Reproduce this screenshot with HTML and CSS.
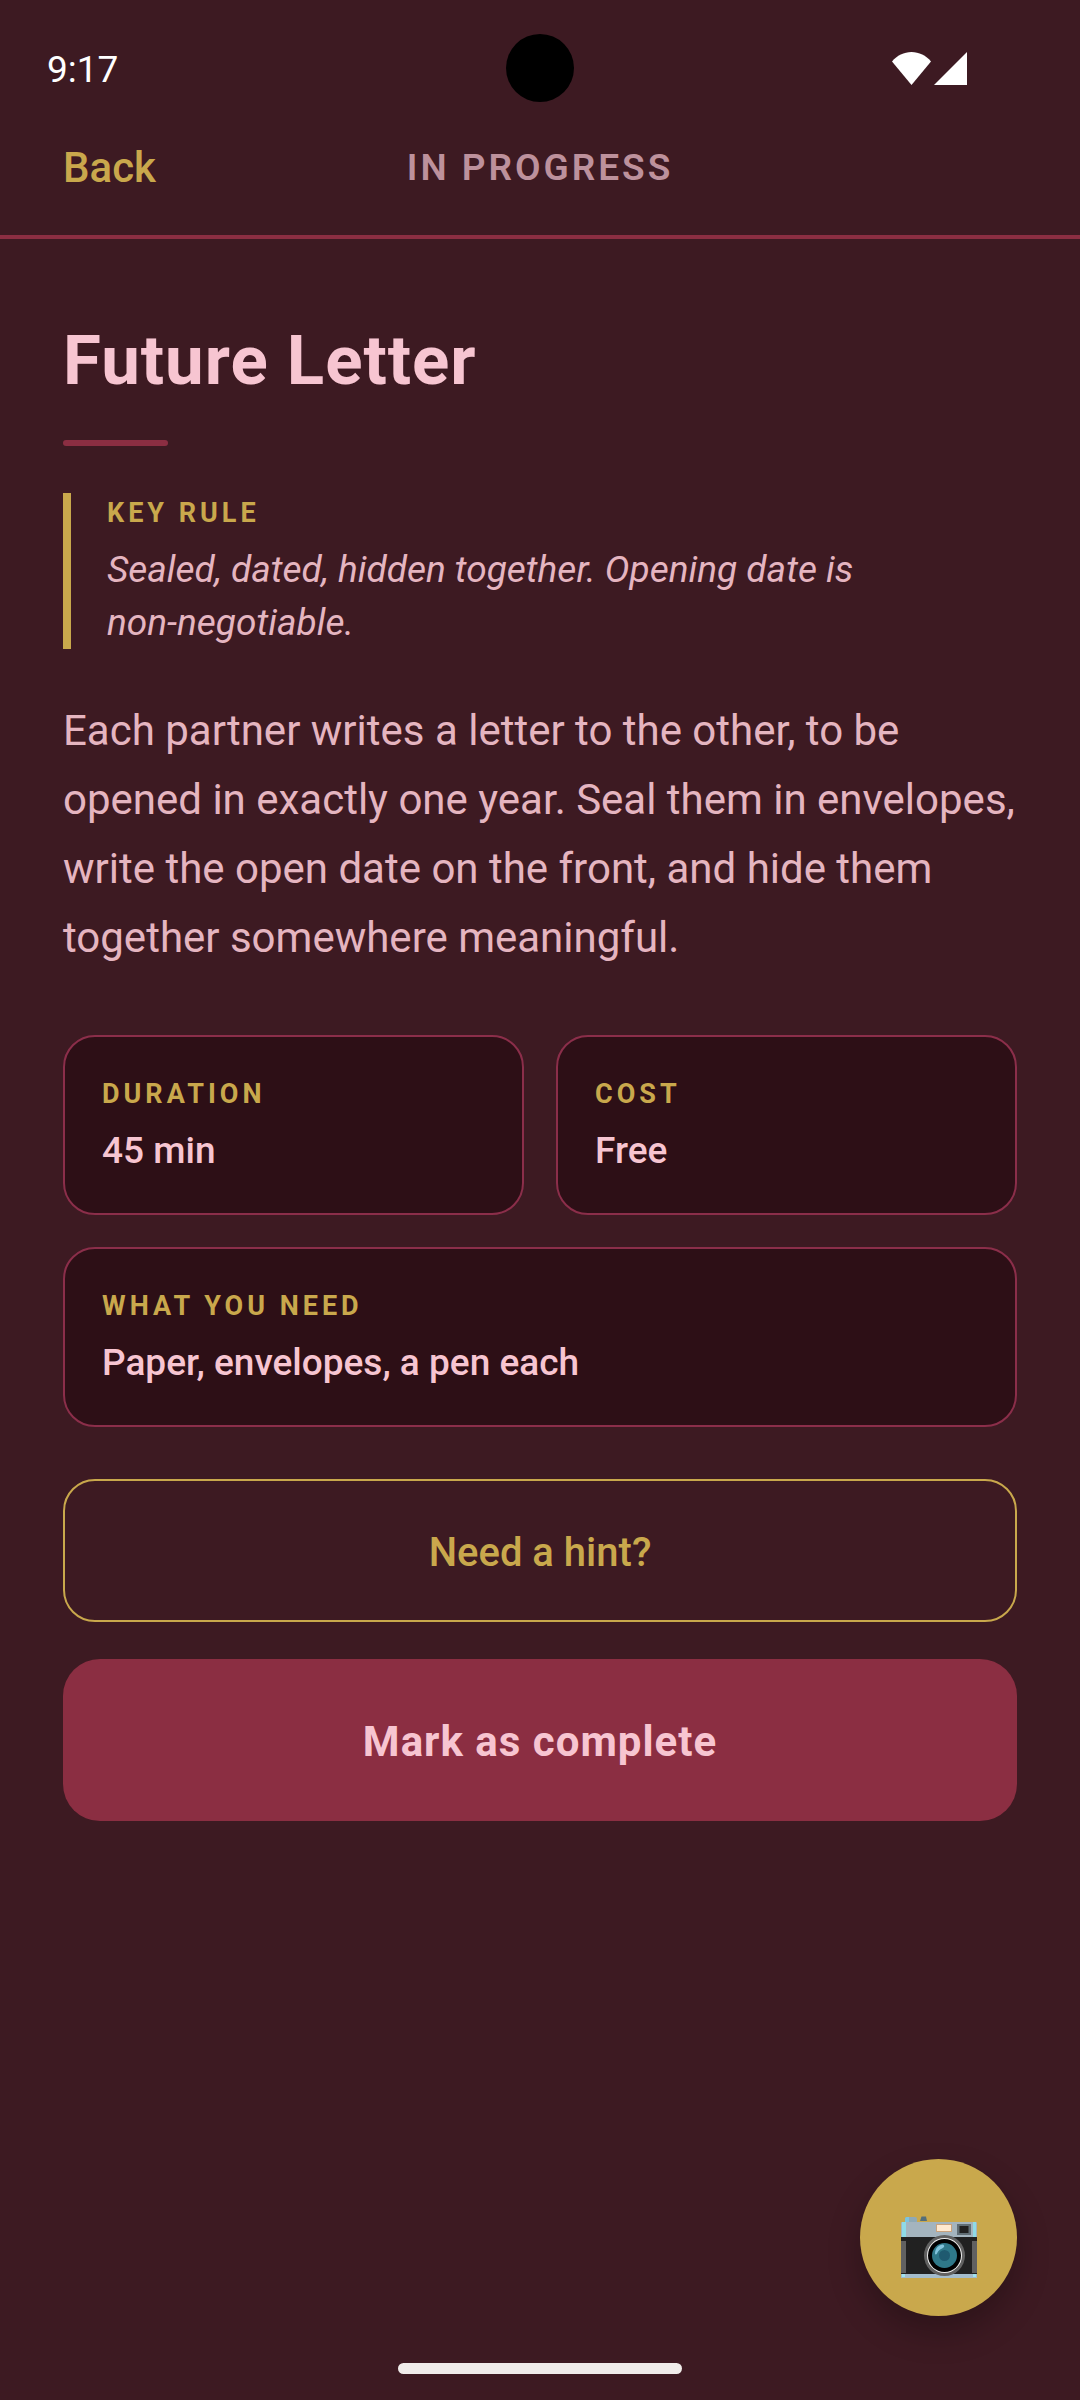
FILE: index.html
```html
<!DOCTYPE html>
<html lang="en">
<head>
    <meta charset="UTF-8">
    <meta name="viewport" content="width=device-width, initial-scale=1.0">
    <title>Future Letter</title>
    <link rel="stylesheet" href="styles.css">
</head>
<body>
    <div class="status-bar">
        <span class="clock">9:17</span>
        <span class="punch-hole"></span>
        <div class="status-icons">
            <svg width="39" height="33" viewBox="0 0 39 33" aria-hidden="true">
                <path d="M0 9.5C5 3.5 12 0 19.5 0S34 3.5 39 9.5L19.5 33z" fill="#fff"/>
            </svg>
            <svg width="33" height="33" viewBox="0 0 33 33" aria-hidden="true">
                <path d="M33 0v33H0z" fill="#fff"/>
            </svg>
        </div>
    </div>

    <header class="top-bar">
        <a class="back" href="#">Back</a>
        <span class="state">IN PROGRESS</span>
    </header>

    <main class="content">
        <h1>Future Letter</h1>
        <div class="divider"></div>

        <section class="key-rule">
            <h2 class="label">KEY RULE</h2>
            <p class="rule-text">Sealed, dated, hidden together. Opening date is <span class="nowrap">non-negotiable.</span></p>
        </section>

        <p class="description">Each partner writes a letter to the other, to be opened in exactly one year. Seal them in envelopes, write the open date on the front, and hide them together somewhere meaningful.</p>

        <div class="cards">
            <div class="card">
                <h2 class="label">DURATION</h2>
                <p class="value">45 min</p>
            </div>
            <div class="card">
                <h2 class="label">COST</h2>
                <p class="value">Free</p>
            </div>
            <div class="card wide">
                <h2 class="label">WHAT YOU NEED</h2>
                <p class="value">Paper, envelopes, a pen each</p>
            </div>
        </div>

        <button type="button" class="btn btn-hint">Need a hint?</button>
        <button type="button" class="btn btn-complete">Mark as complete</button>
    </main>

    <button type="button" class="camera-btn" aria-label="Take a photo">
        <svg width="76" height="62" viewBox="0 0 76 62" aria-hidden="true">
            <!-- top knobs -->
            <path d="M4 6V2.500Q4 1 6 1h8q2 0 2 2v3z" fill="#8fa9b5"/>
            <path d="M4 6V2.500Q4 1 6 1h2v5z" fill="#7cc4de"/>
            <path d="M19 5l1.500-4.500h4.500L26 5z" fill="#546e7a"/>
            <!-- body -->
            <rect y="6" width="76" height="56" rx="1" fill="#a4b4be"/>
            <rect x="1" y="6" width="4" height="15" fill="#8fdbe6"/>
            <rect x="72" y="6" width="3" height="15" fill="#8fdbe6"/>
            <rect y="21" width="76" height="37" fill="#212121"/>
            <rect y="25" width="5" height="32" fill="#616161"/>
            <rect x="71" y="25" width="5" height="32" fill="#616161"/>
            <rect y="58" width="76" height="4" fill="#a4bccb"/>
            <rect x="1" y="58" width="3" height="3" fill="#a0e4ef"/>
            <rect x="72" y="58" width="3" height="3" fill="#a0e4ef"/>
            <!-- flash and viewfinder -->
            <rect x="35.500" y="8.500" width="15" height="7" fill="#ffe9cf" stroke="#c9a27d"/>
            <rect x="56" y="8" width="14" height="11" fill="#616e75"/>
            <rect x="58.500" y="10" width="9" height="7" fill="#212121"/>
            <!-- lens -->
            <circle cx="43.500" cy="39.500" r="20.500" fill="#616161"/>
            <circle cx="43.500" cy="39.500" r="17.500" fill="#eee"/>
            <circle cx="43.500" cy="39.500" r="16.500" fill="#000"/>
            <circle cx="43.500" cy="39.500" r="12.500" fill="#2f7889"/>
            <circle cx="43.500" cy="39.500" r="5.500" fill="#1f5a70"/>
            <path d="M34 38c0-6 4-9.500 8-9.500 2 1 1.500 3-1 4-3 1-4 3-5 5-.6 1.200-1.600 1.200-2 .5z" fill="#82c4dc"/>
        </svg>
    </button>

    <div class="home-bar"></div>
</body>
</html>
```
FILE: styles.css
```css
* {
    box-sizing: border-box;
}
body {
    font-family: Roboto, "Noto Sans", sans-serif;
    margin: 0;
    min-height: 100vh;
    background-color: #3d1a22;
    color: #f7c5d1;
}
h1, h2, p {
    margin: 0;
}

/* Status bar */
.status-bar {
    display: grid;
    grid-template-columns: 1fr auto 1fr;
    align-items: center;
    height: 136px;
    padding: 0 47px;
}
.clock {
    font-size: 37px;
    line-height: 44px;
    padding-top: 4px;
    color: white;
}
.punch-hole {
    width: 68px;
    height: 68px;
    border-radius: 50%;
    background-color: black;
}
.status-icons {
    display: flex;
    justify-content: flex-end;
    gap: 3px;
    padding-right: 66px;
}

/* Header */
.top-bar {
    display: grid;
    grid-template-columns: 1fr auto 1fr;
    align-items: center;
    padding: 7px 63px 42px;
    border-bottom: 4px solid #8b2e42;
}
.back {
    font-size: 42px;
    line-height: 50px;
    font-weight: 500;
    color: #c9a84c;
    text-decoration: none;
}
.state {
    font-size: 37px;
    line-height: 44px;
    font-weight: 600;
    letter-spacing: 3px;
    color: #bd919c;
}

/* Content */
.content {
    display: flex;
    flex-direction: column;
    padding: 80px 63px 240px;
}
h1 {
    font-size: 69px;
    line-height: 84px;
    font-weight: 700;
    letter-spacing: 1px;
}
.divider {
    width: 105px;
    height: 6px;
    margin: 37px 0 47px;
    border-radius: 3px;
    background-color: #8b2e42;
}
.label {
    font-size: 27px;
    line-height: 40px;
    font-weight: 700;
    letter-spacing: 4px;
    margin-bottom: 10px;
    color: #c9a84c;
}
.key-rule {
    border-left: 8px solid #c9a84c;
    padding-left: 36px;
    margin-bottom: 47px;
}
.rule-text {
    font-size: 37px;
    line-height: 53px;
    font-style: italic;
    color: #e5b5c0;
}
.nowrap {
    white-space: nowrap;
}
.description {
    font-size: 42px;
    line-height: 69px;
    margin-bottom: 63px;
    color: #e5b5c0;
}

/* Info cards */
.cards {
    display: grid;
    grid-template-columns: 1fr 1fr;
    gap: 32px;
    margin-bottom: 52px;
}
.card {
    padding: 37px;
    border: 2px solid #8b2e4a;
    border-radius: 32px;
    background-color: #2d0f16;
}
.wide {
    grid-column: span 2;
}
.value {
    font-size: 37px;
    line-height: 50px;
    font-weight: 500;
    padding-top: 2px;
}

/* Buttons */
.btn {
    font-family: inherit;
    width: 100%;
    cursor: pointer;
}
.btn-hint {
    font-size: 40px;
    line-height: 53px;
    font-weight: 500;
    padding: 45px 43px 41px;
    margin-bottom: 37px;
    border: 2px solid #c9a84c;
    border-radius: 32px;
    background: none;
    color: #c9a84c;
}
.btn-complete {
    font-size: 42px;
    line-height: 68px;
    font-weight: 700;
    letter-spacing: 1px;
    padding: 49px 47px 45px;
    border: none;
    border-radius: 37px;
    background-color: #8b2e42;
    color: #f7c5d1;
}
.camera-btn {
    position: fixed;
    right: 63px;
    bottom: 84px;
    display: flex;
    align-items: center;
    justify-content: center;
    width: 157px;
    height: 157px;
    padding: 18px 0 0;
    border: none;
    border-radius: 50%;
    background-color: #c9a84c;
    box-shadow: 0 16px 32px rgba(0, 0, 0, 0.25);
    cursor: pointer;
}
.home-bar {
    position: fixed;
    left: 50%;
    bottom: 26px;
    width: 284px;
    height: 11px;
    margin-left: -142px;
    border-radius: 6px;
    background-color: #f0ecea;
}
```
